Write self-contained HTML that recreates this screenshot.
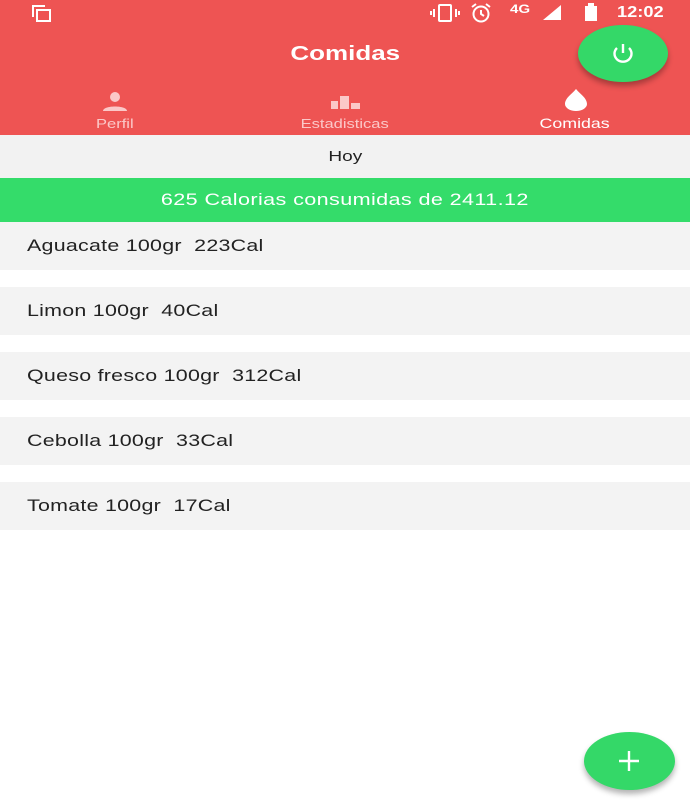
<!DOCTYPE html>
<html><head><meta charset="utf-8"><style>
*{margin:0;padding:0;box-sizing:border-box}
body{width:690px;height:800px;background:#fff;font-family:"Liberation Sans",sans-serif;position:relative;overflow:hidden}
.hdr{position:absolute;left:0;top:0;width:690px;height:135px;background:#ee5453;box-shadow:0 2px 3px rgba(0,0,0,.2)}
.abs{position:absolute}
.t{color:#fff}
.s{display:inline-block;transform:scaleX(1.27);transform-origin:center}
.sl{display:inline-block;transform:scaleX(1.26);transform-origin:left}
.hoy{position:absolute;top:135px;left:0;width:690px;height:43px;background:#f2f2f2;text-align:center;line-height:43px;font-size:15px;color:#222}
.green{position:absolute;top:178px;left:0;width:690px;height:44px;background:#34dc6a;text-align:center;line-height:44px;font-size:17px;color:#fff;letter-spacing:.3px}
.row{position:absolute;left:0;width:690px;height:48px;background:#f3f3f3;line-height:48px;padding-left:27px;font-size:17px;color:#222;letter-spacing:.2px}
.fab{position:absolute;background:#34d868;border-radius:50%;box-shadow:0 4px 6px rgba(0,0,0,.3)}
</style></head><body>
<div class="hdr"></div>
<svg class="abs" style="left:31px;top:4px" width="22" height="18" viewBox="0 0 22 18"><path d="M2 13V2h12" fill="none" stroke="#fff" stroke-width="2"/><rect x="6" y="6" width="13" height="11" fill="none" stroke="#fff" stroke-width="2"/></svg>
<svg class="abs" style="left:430px;top:4px" width="30" height="18" viewBox="0 0 30 18"><rect x="9" y="1" width="12" height="16" rx="1" fill="none" stroke="#fff" stroke-width="2"/><path d="M4 5v8M1 7v4M26 5v8M29 7v4" stroke="#fff" stroke-width="2"/></svg>
<svg class="abs" style="left:470px;top:3px" width="22" height="20" viewBox="0 0 22 20"><circle cx="11" cy="11" r="7.5" fill="none" stroke="#fff" stroke-width="2"/><path d="M11 7v4l3 2M2 4l4-3M20 4l-4-3" fill="none" stroke="#fff" stroke-width="2"/></svg>
<div class="abs t" style="left:510px;top:2px;font-size:12px;font-weight:bold"><span class="sl">4G</span></div>
<svg class="abs" style="left:543px;top:5px" width="18" height="15"><path d="M18 0V15H0Z" fill="#fff"/></svg>
<div class="abs" style="left:585px;top:6px;width:12px;height:15px;background:#fff"></div>
<div class="abs" style="left:588px;top:3px;width:6px;height:3px;background:#fff"></div>
<div class="abs t" style="left:617px;top:4px;font-size:16px;font-weight:bold"><span class="sl" style="transform:scaleX(1.14)">12:02</span></div>
<div class="abs t" style="left:0;width:690px;text-align:center;top:43px;font-size:20px;font-weight:bold"><span class="s" style="transform:scaleX(1.3)">Comidas</span></div>
<div class="fab" style="left:578px;top:25px;width:90px;height:57px"></div>
<svg class="abs" style="left:609px;top:39px" width="28" height="28" viewBox="0 0 28 28"><path d="M8 9a8.5 8 0 1 0 12 0" fill="none" stroke="#fff" stroke-width="2.4"/><path d="M14 5v9" stroke="#fff" stroke-width="2.4"/></svg>
<svg class="abs" style="left:102px;top:92px" width="26" height="19"><circle cx="13" cy="5" r="5" fill="#fbc8c8"/><path d="M1 19c0-6 24-6 24 0z" fill="#fbc8c8"/></svg>
<div class="abs" style="left:0;width:230px;text-align:center;top:116px;font-size:13px;color:#fbc8c8"><span class="s">Perfil</span></div>
<svg class="abs" style="left:331px;top:96px" width="30" height="13"><rect x="0" y="5" width="7" height="8" fill="#fbc8c8"/><rect x="9" y="0" width="9" height="13" fill="#fbc8c8"/><rect x="20" y="7" width="9" height="6" fill="#fbc8c8"/></svg>
<div class="abs" style="left:230px;width:230px;text-align:center;top:116px;font-size:13px;color:#fbc8c8"><span class="s">Estadisticas</span></div>
<svg class="abs" style="left:564px;top:89px" width="24" height="22"><path d="M12 0C8 5 1 9 1 15a11 7 0 0 0 22 0C23 9 16 5 12 0z" fill="#fff"/></svg>
<div class="abs t" style="left:460px;width:230px;text-align:center;top:115px;font-size:14px"><span class="s">Comidas</span></div>
<div class="hoy"><span class="s">Hoy</span></div>
<div class="green"><span class="s">625 Calorias consumidas de 2411.12</span></div>
<div class="row" style="top:222px"><span class="sl">Aguacate 100gr&nbsp; 223Cal</span></div>
<div class="row" style="top:287px"><span class="sl">Limon 100gr&nbsp; 40Cal</span></div>
<div class="row" style="top:352px"><span class="sl">Queso fresco 100gr&nbsp; 312Cal</span></div>
<div class="row" style="top:417px"><span class="sl">Cebolla 100gr&nbsp; 33Cal</span></div>
<div class="row" style="top:482px"><span class="sl">Tomate 100gr&nbsp; 17Cal</span></div>
<div class="fab" style="left:584px;top:732px;width:91px;height:58px"></div>
<svg class="abs" style="left:618px;top:750px" width="22" height="22"><path d="M11 1v20M1 11h20" stroke="#fff" stroke-width="2.4"/></svg>
</body></html>
